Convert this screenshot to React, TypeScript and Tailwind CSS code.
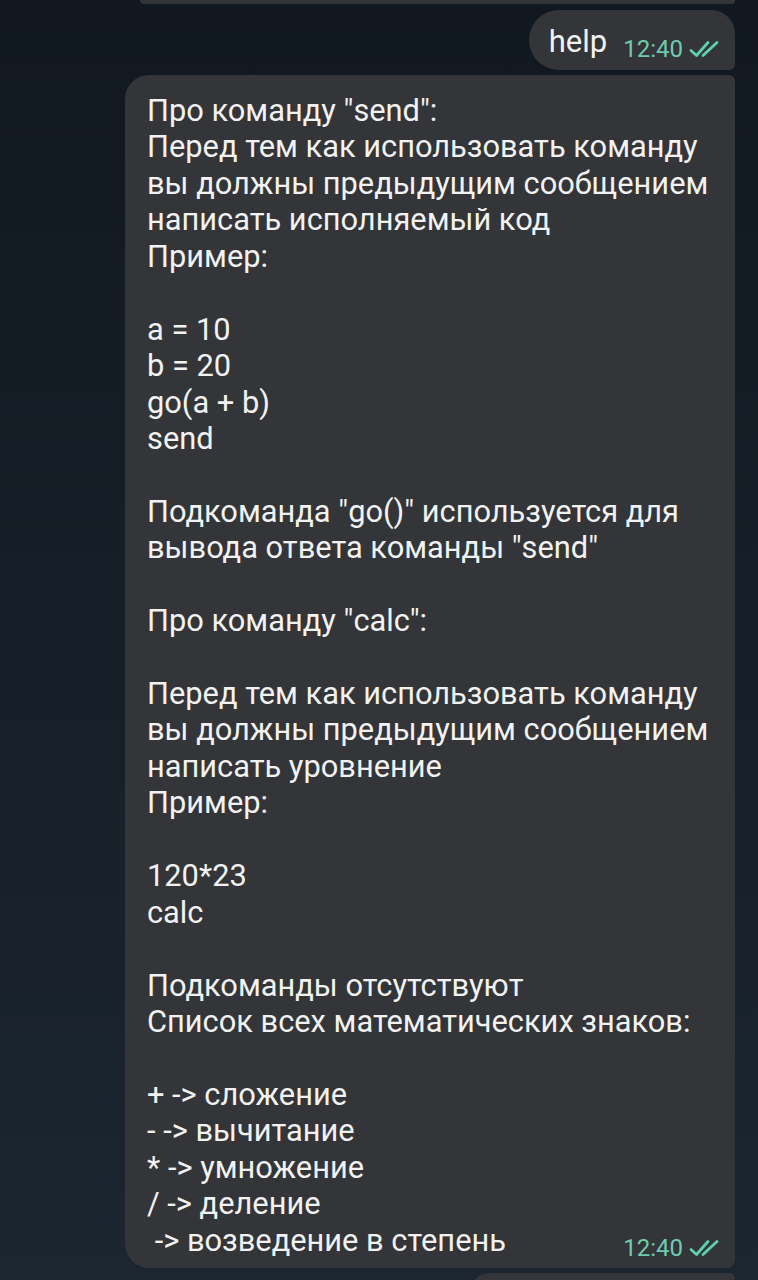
const lines = [
  'Про команду "send":',
  "Перед тем как использовать команду",
  "вы должны предыдущим сообщением",
  "написать исполняемый код",
  "Пример:",
  "",
  "a = 10",
  "b = 20",
  "go(a + b)",
  "send",
  "",
  'Подкоманда "go()" используется для',
  'вывода ответа команды "send"',
  "",
  'Про команду "calc":',
  "",
  "Перед тем как использовать команду",
  "вы должны предыдущим сообщением",
  "написать уровнение",
  "Пример:",
  "",
  "120*23",
  "calc",
  "",
  "Подкоманды отсутствуют",
  "Список всех математических знаков:",
  "",
  "+ -> сложение",
  "- -> вычитание",
  "* -> умножение",
  "/ -> деление",
];

const lastLine = " -> возведение в степень";

const DoubleCheck = () => (
  <svg width="34" height="20" viewBox="0 0 34 20" fill="none" className="shrink-0">
    <path
      d="M2 11.5 L7.5 16.5 L19 3.5"
      stroke="#5fd1b0"
      strokeWidth="2.8"
      strokeLinecap="round"
      strokeLinejoin="round"
    />
    <path
      d="M14 16.5 L28 3.5"
      stroke="#5fd1b0"
      strokeWidth="2.8"
      strokeLinecap="round"
      strokeLinejoin="round"
    />
  </svg>
);

const Meta = () => (
  <div className="flex items-center gap-[6px] text-[24px] text-[#6fcbae] leading-none">
    <span>12:40</span>
    <DoubleCheck />
  </div>
);

export default function App() {
  return (
    <div
      className="w-[758px] h-[1280px] overflow-hidden bg-gradient-to-b from-[#111820] via-[#161e27] to-[#1b2630] text-[#f2f2f2]"
      style={{ fontFamily: "Roboto, 'Noto Sans', sans-serif" }}
    >
      <div className="flex flex-col items-end gap-[5px] pr-[23px]">
        {/* tail of the previous message */}
        <div className="w-[595px] h-[4px] bg-[#333538] rounded-bl-[10px] rounded-br-[6px]" />

        <div className="flex items-end gap-[16px] h-[60px] mt-[1px] pl-[20px] pr-[12px] pb-[9px] bg-[#333538] rounded-l-[30px] rounded-tr-[24px] rounded-br-[6px]">
          <span className="text-[31px] leading-none mb-[4px]">help</span>
          <Meta />
        </div>

        <div className="w-[610px] bg-[#333538] rounded-l-[24px] rounded-tr-[6px] rounded-br-[8px] pl-[22px] pr-[12px] pt-[18px] pb-[9px]">
          <div className="text-[30.8px] leading-[36.45px]">
            {lines.map((l, i) => (
              <div key={i} className="whitespace-pre h-[36.45px]">
                {l}
              </div>
            ))}
            <div className="flex items-end justify-between">
              <span className="whitespace-pre">{lastLine}</span>
              <div className="-mb-[1px]">
                <Meta />
              </div>
            </div>
          </div>
        </div>

        {/* head of the next message */}
        <div className="w-[265px] h-[20px] bg-[#333538] rounded-tl-[24px] rounded-tr-[6px]" />
      </div>
    </div>
  );
}
